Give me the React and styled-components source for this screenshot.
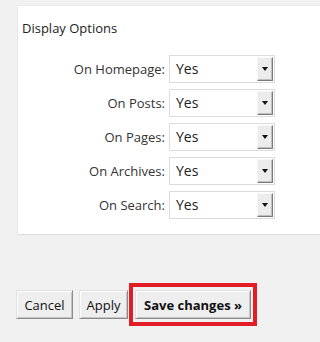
import styled, { createGlobalStyle } from "styled-components";

const GlobalStyle = createGlobalStyle`
  html, body {
    margin: 0;
    overflow: hidden;
  }
  body {
    background: #f1f1f1;
    font-family: "Open Sans", "Liberation Sans", sans-serif;
    color: #333;
  }
`;

const Page = styled.div`
  height: 342px;
  overflow: hidden;
  padding: 6px 0 0 18px;
  box-sizing: border-box;
`;

const Panel = styled.div`
  background: #fff;
  box-sizing: border-box;
  padding: 13px 0 15px 4px;
  box-shadow: 0 1px 1px rgba(0, 0, 0, 0.05), 0 0 0 1px #e9e9e9;
`;

const Title = styled.div`
  font-size: 13px;
  line-height: 18px;
  color: #222;
  margin-bottom: 18px;
`;

const Rows = styled.div`
  display: flex;
  flex-direction: column;
  gap: 6px;
  margin-left: -4px;
`;

const Row = styled.div`
  display: flex;
  align-items: center;
`;

const Label = styled.label`
  width: 147px;
  margin-right: 4px;
  text-align: right;
  font-size: 13px;
  color: #333;
`;

const Select = styled.div`
  width: 106px;
  height: 28px;
  box-sizing: border-box;
  border: 1px solid #dcdcdc;
  padding: 1px;
  display: flex;
  align-items: stretch;
  background: #fff;
`;

const Value = styled.span`
  flex: 1;
  padding-left: 5px;
  font-size: 14px;
  line-height: 24px;
  color: #222;
`;

const DropButton = styled.span`
  width: 16px;
  box-sizing: border-box;
  background: #ececec;
  border-style: solid;
  border-width: 1px;
  border-color: #f7f7f7 #7a7a7a #7a7a7a #f7f7f7;
  box-shadow: inset -1px -1px #c0c0c0;
  display: flex;
  align-items: center;
  justify-content: center;
`;

const Arrow = styled.span`
  width: 0;
  height: 0;
  border-left: 3.5px solid transparent;
  border-right: 3.5px solid transparent;
  border-top: 4px solid #111;
`;

const Actions = styled.div`
  display: flex;
  align-items: center;
  margin: 49px 0 0 -2px;
`;

const Button = styled.button`
  width: ${({ $w }) => $w}px;
  height: 29px;
  box-sizing: border-box;
  padding: 0;
  font-family: "Open Sans", "Liberation Sans", sans-serif;
  font-size: 13px;
  font-weight: ${({ $bold }) => ($bold ? 700 : 400)};
  color: #111;
  background: #eeeeee;
  border-style: solid;
  border-width: 1px;
  border-color: #e0e0e0 #8c8c8c #8c8c8c #e0e0e0;
  box-shadow: inset 1px 1px #fff, inset -1px -1px #c4c4c4;
  margin-right: ${({ $gap }) => $gap}px;
  white-space: nowrap;
`;

const Highlight = styled.div`
  border: 4px solid #e31d25;
  padding: 3px 2px;
  display: flex;
`;

const options = ["Homepage", "Posts", "Pages", "Archives", "Search"];

export default function App() {
  return (
    <>
      <GlobalStyle />
      <Page>
        <Panel>
          <Title>Display Options</Title>
          <Rows>
            {options.map((o) => (
              <Row key={o}>
                <Label>On {o}:</Label>
                <Select>
                  <Value>Yes</Value>
                  <DropButton>
                    <Arrow />
                  </DropButton>
                </Select>
              </Row>
            ))}
          </Rows>
        </Panel>
        <Actions>
          <Button $w={57} $gap={6}>Cancel</Button>
          <Button $w={49} $gap={1}>Apply</Button>
          <Highlight>
            <Button $w={116} $gap={0} $bold>
              Save changes »
            </Button>
          </Highlight>
        </Actions>
      </Page>
    </>
  );
}
